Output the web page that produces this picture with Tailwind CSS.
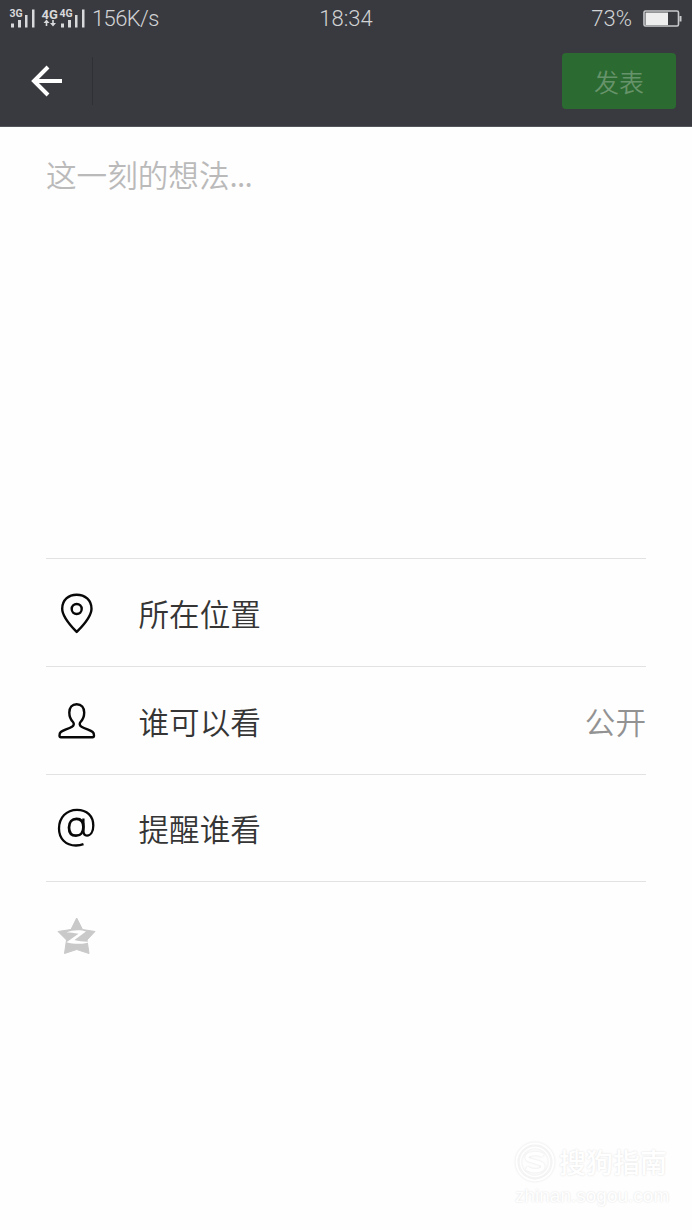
<!DOCTYPE html>
<html lang="zh-CN">
<head>
<meta charset="utf-8">
<title>发表</title>
<script src="https://cdn.jsdelivr.net/npm/@tailwindcss/browser@4"></script>
</head>
<body class="w-[692px] h-[1230px] overflow-hidden bg-[#fefefe] font-['Noto_Sans_CJK_SC',sans-serif] flex flex-col">
<header class="h-[127px] shrink-0 bg-[#393a3f] border-b border-[#54555a]">
  <div class="h-9 grid grid-cols-3 items-center text-[#d2d3d5] font-['Roboto',sans-serif] font-light text-[22px] leading-9">
    <div class="flex items-center">
      <svg class="w-[92px] h-9 shrink-0" viewBox="0 0 92 36" fill="#d8d9db" font-family="Roboto, sans-serif" font-weight="bold">
        <text x="9.500" y="15.500" font-size="10.500">3G</text>
        <path d="M11 22.500h3v4h-3zM18 19h3v7.500h-3zM25 14h2.500v12.500h-2.500zM32 8.500h2.500v18h-2.500z"/>
        <text x="41.500" y="17.500" font-size="13">4G</text>
        <path d="M46.500 18.500l-3 3.500h2.200v3h1.600v-3h2.200zM53 25.500l-3-3.500h2.200v-3h1.600v3h2.200z"/>
        <text x="59.500" y="15.500" font-size="10.500">4G</text>
        <path d="M61 22.500h3v4h-3zM68 19h3v7.500h-3zM75 14h2.500v12.500h-2.500zM82 8.500h2.500v18h-2.500z"/>
      </svg>
      <span class="whitespace-nowrap tracking-[-0.600px]">156K/s</span>
    </div>
    <div class="text-center pt-px">18:34</div>
    <div class="flex items-center justify-end gap-[11px] pr-[10px]">
      <span>73%</span>
      <svg class="w-[39px] h-[18px]" viewBox="0 0 39 18" fill="none">
        <rect x="1" y="1" width="34.500" height="15" rx="1.500" stroke="#c9cacc" stroke-width="1.600"/>
        <path d="M2.500 2.500h22.500v12.500h-22.500z" fill="#eeeeef"/>
        <path d="M36.500 6h2v5.500h-2z" fill="#c9cacc"/>
      </svg>
    </div>
  </div>
  <div class="h-[90px] flex items-center pr-4">
    <div class="w-[92px] flex pl-[31px]">
      <svg class="w-8 h-8" viewBox="0 0 32 32" fill="none" stroke="#fff" stroke-width="4"><path d="M17 2L3 16l14 14M3 16h28"/></svg>
    </div>
    <div class="w-px h-12 bg-[#2f3034]"></div>
    <button class="ml-auto w-[114px] h-14 rounded bg-[#2b6a30] text-[#67936b] text-[25px] font-[350]"><span class="block pt-px">发表</span></button>
  </div>
</header>
<main class="px-[46px] text-[30.600px] text-[#353535] leading-[44px] font-[350]">
  <div class="h-[431px] pt-[25px] text-[#bababa]">这一刻的想法<span class="tracking-[-0.800px]">...</span></div>
  <div class="h-[108px] border-t border-[#e2e2e2] flex items-center gap-[41.500px] pl-[10px]">
    <svg class="w-[41px] h-[42px]" viewBox="0 0 41 42" fill="none" stroke="#080808" stroke-width="2.400"><path d="M20.700 40C16 35 6.200 25.500 6.200 16.700C6.200 8 12.500 2.700 20.700 2.700S35.500 8 35.500 16.700C35.500 25.500 25.500 35 20.700 40z" stroke-linejoin="round"/><circle cx="20.700" cy="17" r="5"/></svg>
    <span>所在位置</span>
  </div>
  <div class="h-[108px] border-t border-[#e2e2e2] flex items-center gap-[41.500px] pl-[10px]">
    <svg class="w-[41px] h-[42px]" viewBox="0 0 41 42" fill="none" stroke="#080808" stroke-width="2.400" stroke-linejoin="round"><path d="M20.700 4.200C16 4.200 13.300 7.500 13.300 12.500C13.300 17 15 20 17 22C18.300 23.500 18 25.500 16 26.700C12 29 7 30.300 4.800 32C3.500 33 3.500 34.300 3.500 35.500C3.500 36.700 4 37.300 5 37.300H36.500C37.500 37.300 38 36.700 38 35.500C38 34.300 38 33 36.700 32C34.500 30.300 29.500 29 25.500 26.700C23.500 25.500 23.200 23.500 24.500 22C26.500 20 28.200 17 28.200 12.500C28.200 7.500 25.500 4.200 20.700 4.200z"/></svg>
    <span>谁可以看</span>
    <span class="ml-auto text-[#929292]">公开</span>
  </div>
  <div class="h-[107px] border-t border-[#e2e2e2] flex items-center gap-[41.500px] pl-[10px]">
    <svg class="w-[41px] h-[42px]" viewBox="0 0 41 42" fill="none" stroke="#080808"><path d="M27.500 37.200C24.500 38.300 22 38.500 20 38.500C9.500 38.500 3 31.500 3 21.500C3 10.500 10.500 2.800 21 2.800C31 2.800 37.300 9 37.300 18.500C37.300 25 34.500 28.600 31 28.600C28.300 28.600 27.400 26.800 27.400 23.500V11.500" stroke-width="2.300"/><path d="M27.400 20C27.400 25.500 24.500 28.700 20 28.700C15.500 28.700 13 25.500 13 20.500C13 15 16 11.800 20.500 11.800C25 11.800 27.400 14.800 27.400 20z" stroke-width="2.700"/></svg>
    <span>提醒谁看</span>
  </div>
  <div class="h-[108px] border-t border-[#e2e2e2] flex items-center pl-[10px]">
    <svg class="w-[41px] h-[40px]" viewBox="0 0 41 40"><path fill="#c9c9c9" stroke="#c9c9c9" stroke-linejoin="round" d="M20.700 2L26.500 13.500L39 15.500L31 24L33 37.500L20.700 33.500L8.500 37.500L10.500 24L2 15.500L15 13.500z"/><path fill="#fefefe" d="M10.500 16.500C16 13.800 25 13.800 30 15.500L18.500 24C24 25.500 30 26 35.500 25.500C29 28.500 18 28.500 10.500 26.200L22.500 17.800C18 16.800 14 16.500 10.500 16.500z"/></svg>
  </div>
</main>
<footer class="mt-auto mb-[21px] ml-auto mr-[23px] w-[154px] text-white [text-shadow:0_0_2px_#dcdcdc]">
  <div class="flex items-center gap-1 h-[42px]">
    <svg class="w-10 h-10 shrink-0 overflow-visible [filter:drop-shadow(0_0_1px_#e2e2e2)]" viewBox="0 0 40 40" fill="none" stroke="#fff"><circle cx="20" cy="20" r="18.500" stroke-width="2"/><circle cx="20" cy="20" r="14.500" stroke-width="1.500"/><path d="M28 13.500C23 10.500 12 11 12 15.500C12 20 28 19 28 24.500C28 29.500 17 30 11.500 26" stroke-width="3.500"/></svg>
    <span class="text-[27px] font-medium leading-10 whitespace-nowrap">搜狗指南</span>
  </div>
  <div class="font-['Liberation_Sans',sans-serif] text-[19px] leading-[26px] whitespace-nowrap">zhinan.sogou.com</div>
</footer>
</body>
</html>
